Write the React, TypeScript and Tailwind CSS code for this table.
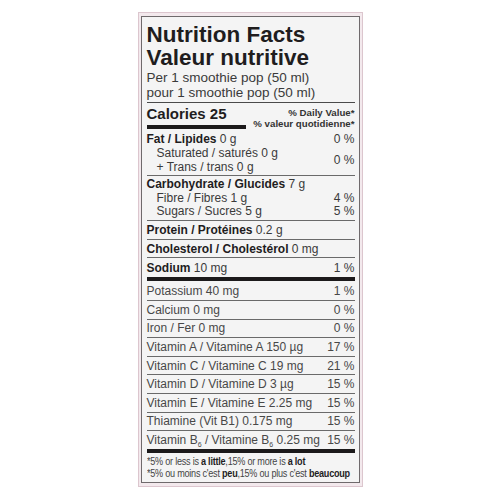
const sans = { fontFamily: '"Liberation Sans", Arial, sans-serif' };

type Row = { label: string; pct: string };

const lower: Row[] = [
  { label: "Calcium 0 mg", pct: "0 %" },
  { label: "Iron / Fer 0 mg", pct: "0 %" },
  { label: "Vitamin A / Vitamine A 150 µg", pct: "17 %" },
  { label: "Vitamin C / Vitamine C 19 mg", pct: "21 %" },
  { label: "Vitamin D / Vitamine D 3 µg", pct: "15 %" },
  { label: "Vitamin E / Vitamine E 2.25 mg", pct: "15 %" },
  { label: "Thiamine (Vit B1) 0.175 mg", pct: "15 %" },
];

const Bar = () => <div className="w-full h-[4px] bg-[#1c1a1b]" />;

export default function App() {
  return (
    <div className="w-[500px] h-[500px] bg-white flex justify-center pt-[12px]" style={sans}>
      <div className="w-[225px] h-[475px] bg-[#f3e9ed] border border-[#dcc6ce] px-[2px] pt-[3px]">
        <div className="w-[219px] border border-[#6f6a6c] bg-[#f4f4f4] pl-[5px] pr-[4px] pt-[6px] pb-[3px] text-[#3a3a3a] whitespace-nowrap">
          {/* title */}
          <div className="border-b border-[#4a4a4a] pb-[2px]">
            <div className="text-[22.5px] leading-[23px] font-bold text-[#1f1d1e]">Nutrition Facts</div>
            <div className="text-[22.5px] leading-[23px] font-bold text-[#1f1d1e]">Valeur nutritive</div>
            <div className="mt-[1px] text-[13.5px] leading-[15px]">Per 1 smoothie pop (50 ml)</div>
            <div className="text-[13.5px] leading-[15px]">pour 1 smoothie pop (50 ml)</div>
          </div>

          {/* calories */}
          <div className="flex justify-between items-start">
            <div className="pt-[2px]">
              <div className="text-[15px] leading-[18px] font-bold text-[#1f1d1e]">Calories 25</div>
              <div className="mt-[2px] w-[99px] h-[4px] bg-[#1c1a1b]" />
            </div>
            <div className="pt-[4px] text-right text-[9.7px] leading-[11px] font-bold text-[#333]">
              <div>% Daily Value*</div>
              <div>% valeur quotidienne*</div>
            </div>
          </div>

          {/* fat */}
          <div className="pt-[3px] pb-[1px] border-b border-[#6a6a6a] text-[12px] leading-[14px]">
            <div className="flex justify-between">
              <span>
                <b className="text-[#1f1d1e]">Fat / Lipides</b> 0 g
              </span>
              <span>0 %</span>
            </div>
            <div className="flex justify-between items-center">
              <div className="pl-[10px]">
                <div>Saturated / saturés 0 g</div>
                <div>+ Trans / trans 0 g</div>
              </div>
              <span>0 %</span>
            </div>
          </div>

          {/* carbs */}
          <div className="pt-[2px] pb-[1.5px] border-b border-[#6a6a6a] text-[12px] leading-[13.5px]">
            <div>
              <b className="text-[#1f1d1e]">Carbohydrate / Glucides</b> 7 g
            </div>
            <div className="flex justify-between">
              <span className="pl-[10px]">Fibre / Fibres 1 g</span>
              <span>4 %</span>
            </div>
            <div className="flex justify-between">
              <span className="pl-[10px]">Sugars / Sucres 5 g</span>
              <span>5 %</span>
            </div>
          </div>

          <div className="h-[19px] border-b border-[#6a6a6a] flex items-center text-[12px] leading-none">
            <span>
              <b className="text-[#1f1d1e]">Protein / Protéines</b> 0.2 g
            </span>
          </div>
          <div className="h-[18px] border-b border-[#6a6a6a] flex items-center text-[12px] leading-none">
            <span>
              <b className="text-[#1f1d1e]">Cholesterol / Cholestérol</b> 0 mg
            </span>
          </div>
          <div className="h-[19px] flex items-center justify-between text-[12px] leading-none">
            <span>
              <b className="text-[#1f1d1e]">Sodium</b> 10 mg
            </span>
            <span>1 %</span>
          </div>
          <Bar />

          {/* vitamins and minerals */}
          <div className="text-[12px] leading-none text-[#484848]">
            <div className="h-[20px] border-b border-[#6a6a6a] flex items-center justify-between">
              <span>Potassium 40 mg</span>
              <span>1 %</span>
            </div>
            {lower.map((r) => (
              <div key={r.label} className="h-[18.6px] border-b border-[#6a6a6a] flex items-center justify-between">
                <span>{r.label}</span>
                <span>{r.pct}</span>
              </div>
            ))}
            <div className="h-[18px] flex items-center justify-between">
              <span>
                Vitamin B<sub className="text-[7px] align-[-1px]">6</sub> / Vitamine B
                <sub className="text-[7px] align-[-1px]">6</sub> 0.25 mg
              </span>
              <span>15 %</span>
            </div>
          </div>
          <Bar />

          {/* footnote */}
          <div className="pt-[2px] text-[11.5px] leading-[12px] text-[#444] tracking-[-0.3px] origin-left scale-x-[0.79]">
            <div>
              *5% or less is <b className="text-[#1f1d1e]">a little</b>,15% or more is <b className="text-[#1f1d1e]">a lot</b>
            </div>
            <div>
              *5% ou moins c'est <b className="text-[#1f1d1e]">peu</b>,15% ou plus c'est <b className="text-[#1f1d1e]">beaucoup</b>
            </div>
          </div>
        </div>
      </div>
    </div>
  );
}
